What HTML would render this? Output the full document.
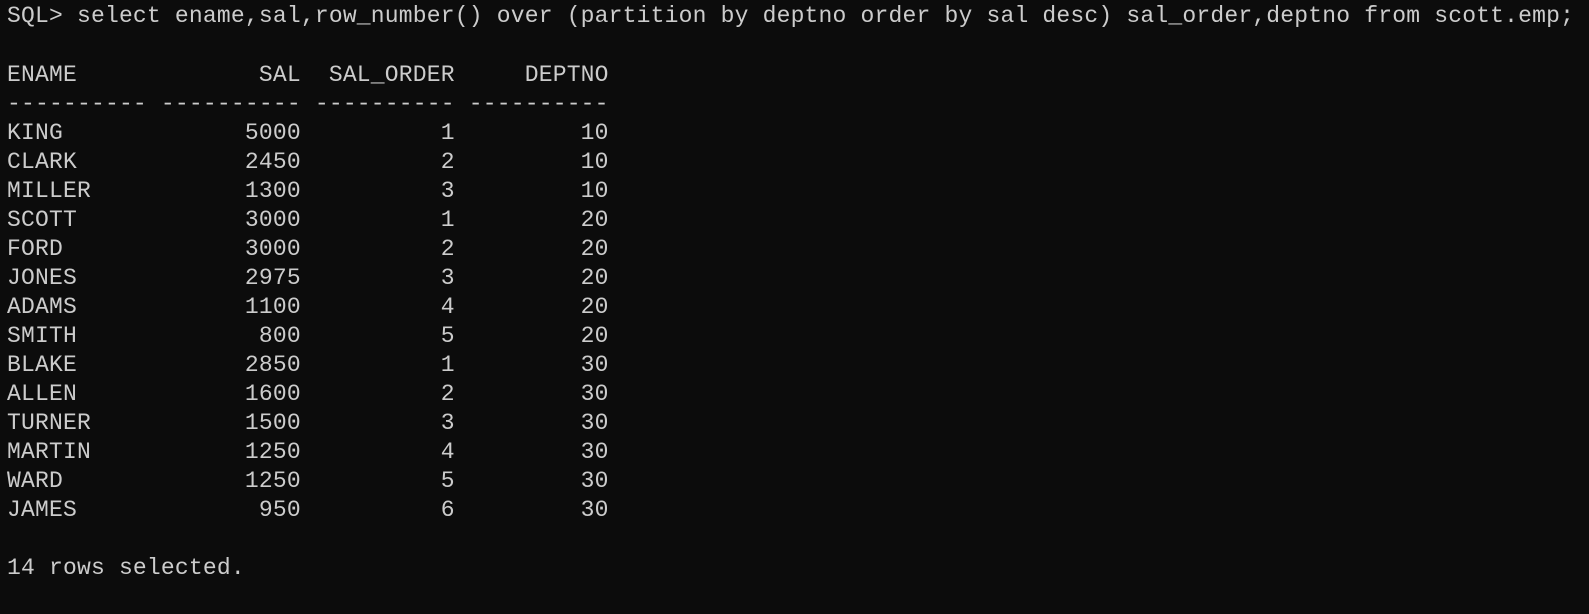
<!DOCTYPE html>
<html><head><meta charset="utf-8"><style>
html,body{margin:0;padding:0;background:#0c0c0c;width:1589px;height:614px;overflow:hidden;position:relative}
.l{position:absolute;left:7px;margin:0;font-family:"Liberation Mono",monospace;font-size:23px;line-height:28px;height:28px;color:#cccccc;white-space:pre;letter-spacing:0.19px}
</style></head><body>
<div class="l" style="top:2px">SQL&gt; select ename,sal,row_number() over (partition by deptno order by sal desc) sal_order,deptno from scott.emp;</div>
<div class="l" style="top:61px">ENAME             SAL  SAL_ORDER     DEPTNO</div>
<div class="l" style="top:90px">---------- ---------- ---------- ----------</div>
<div class="l" style="top:119px">KING             5000          1         10</div>
<div class="l" style="top:148px">CLARK            2450          2         10</div>
<div class="l" style="top:177px">MILLER           1300          3         10</div>
<div class="l" style="top:206px">SCOTT            3000          1         20</div>
<div class="l" style="top:235px">FORD             3000          2         20</div>
<div class="l" style="top:264px">JONES            2975          3         20</div>
<div class="l" style="top:293px">ADAMS            1100          4         20</div>
<div class="l" style="top:322px">SMITH             800          5         20</div>
<div class="l" style="top:351px">BLAKE            2850          1         30</div>
<div class="l" style="top:380px">ALLEN            1600          2         30</div>
<div class="l" style="top:409px">TURNER           1500          3         30</div>
<div class="l" style="top:438px">MARTIN           1250          4         30</div>
<div class="l" style="top:467px">WARD             1250          5         30</div>
<div class="l" style="top:496px">JAMES             950          6         30</div>
<div class="l" style="top:554px">14 rows selected.</div>
</body></html>
